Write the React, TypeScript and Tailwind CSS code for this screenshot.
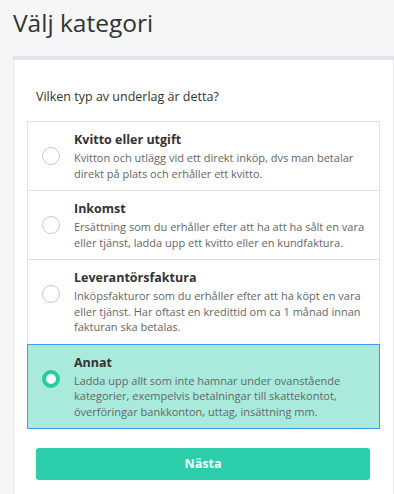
import { useState } from "react";

const options = [
  {
    id: "kvitto",
    title: "Kvitto eller utgift",
    text: "Kvitton och utlägg vid ett direkt inköp, dvs man betalar direkt på plats och erhåller ett kvitto.",
  },
  {
    id: "inkomst",
    title: "Inkomst",
    text: "Ersättning som du erhåller efter att ha att ha sålt en vara eller tjänst, ladda upp ett kvitto eller en kundfaktura.",
  },
  {
    id: "leverantor",
    title: "Leverantörsfaktura",
    text: "Inköpsfakturor som du erhåller efter att ha köpt en vara eller tjänst. Har oftast en kredittid om ca 1 månad innan fakturan ska betalas.",
  },
  {
    id: "annat",
    title: "Annat",
    text: "Ladda upp allt som inte hamnar under ovanstående kategorier, exempelvis betalningar till skattekontot, överföringar bankkonton, uttag, insättning mm.",
  },
];

export default function App() {
  const [selected, setSelected] = useState("annat");

  return (
    <div className="min-h-screen bg-[#f4f6f8] font-['Open_Sans',sans-serif] overflow-hidden">
      <h1 className="pl-[13px] pt-[6px] text-[24.5px] leading-[34px] text-[#333] font-normal">
        Välj kategori
      </h1>

      <div className="mt-[16px] ml-[13px] min-h-[440px] bg-white border-t-4 border-t-[#e1e4e8] border-l border-l-[#e6e8ea] border-r border-r-[#e6e8ea] px-[13px]">
        <p className="mt-[28px] pl-[9px] text-[12.5px] leading-[18px] text-[#333]">
          Vilken typ av underlag är detta?
        </p>

        {/* Category list */}
        <div className="mt-[15px] flex flex-col">
          {options.map((opt, i) => {
            const active = selected === opt.id;
            return (
              <button
                key={opt.id}
                type="button"
                onClick={() => setSelected(opt.id)}
                className={`flex items-start text-left pl-[14px] pr-[14px] pt-[8px] pb-[9px] border ${
                  active
                    ? "bg-[#a9eadc] border-[#3e9df3]"
                    : "bg-white border-[#e3e3e3]"
                } ${i > 0 && !active ? "border-t-0" : ""} ${
                  i > 0 && active ? "-mt-px" : ""
                }`}
              >
                <span
                  className={`mt-[17px] shrink-0 w-[18px] h-[18px] rounded-full ${
                    active
                      ? "border-[4px] border-[#27c9a6] bg-white"
                      : "border border-[#c8c8c8] bg-white"
                  }`}
                />
                <span className="ml-[14px] flex flex-col">
                  <span className="text-[12.5px] leading-[20px] font-bold text-[#333]">
                    {opt.title}
                  </span>
                  <span className="text-[11px] leading-[15.5px] text-[#666]">
                    {opt.text}
                  </span>
                </span>
              </button>
            );
          })}
        </div>

        <button
          type="button"
          className="mt-[19px] ml-[9px] mr-[10px] w-[calc(100%-19px)] h-[32px] rounded-[3px] bg-[#2bcdaa] text-white text-[12.5px] font-bold"
        >
          Nästa
        </button>
      </div>
    </div>
  );
}
